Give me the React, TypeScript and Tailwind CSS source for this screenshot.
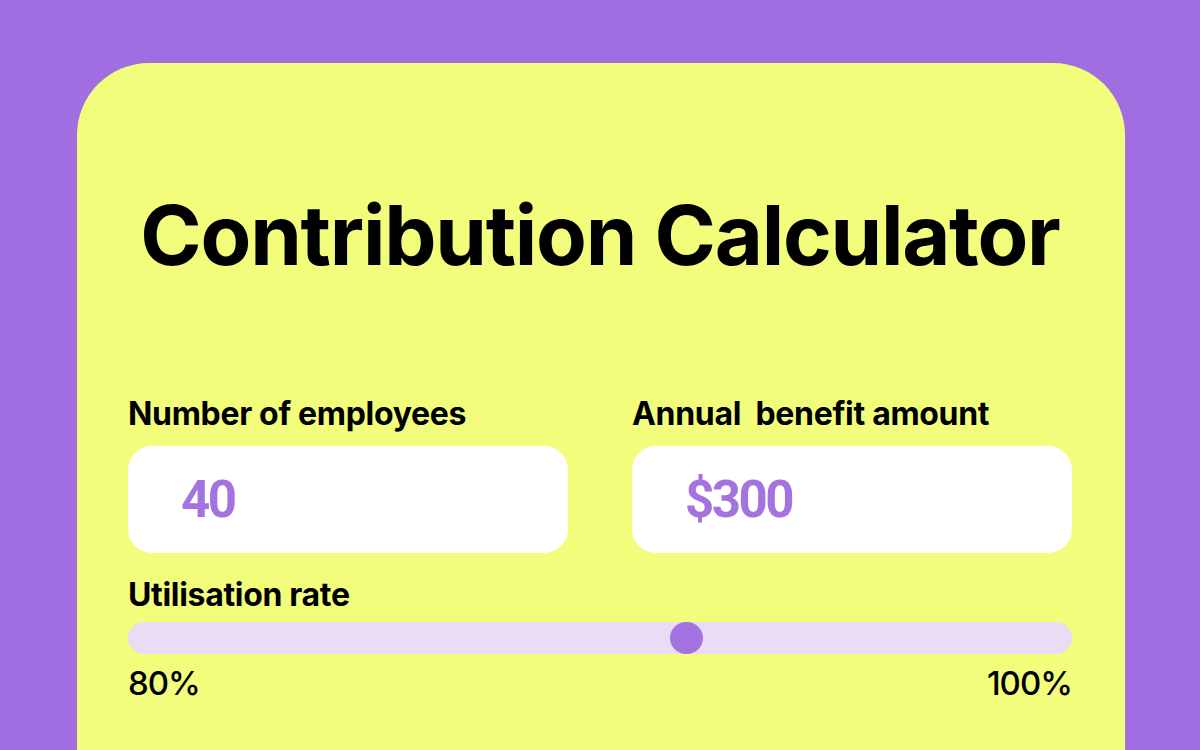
import React from "react";

export default function App() {
  return (
    <div className="w-[1200px] h-[750px] overflow-hidden bg-[#a06ee0] pt-[63px] pl-[77px] pr-[75px]" style={{ fontFamily: "Inter, 'Noto Sans', sans-serif" }}>
      <div className="h-[800px] bg-[#f1fd7b] rounded-[72px] pl-[51px] pr-[53px] pt-[131px]">
        <h1 className="text-center text-[83px] leading-none font-bold tracking-[-0.015em] text-black whitespace-nowrap">
          Contribution Calculator
        </h1>
        <div className="mt-[121px] grid grid-cols-2 gap-[64px]">
          <div>
            <div className="text-[32px] leading-none font-bold tracking-[-0.01em] text-black whitespace-nowrap">Number of employees</div>
            <div className="mt-[16px] h-[107px] rounded-[24px] bg-white flex items-center pl-[53px]">
              <span className="text-[51px] leading-none font-bold tracking-[-0.05em] text-[#a473e0] font-['Roboto',sans-serif]">40</span>
            </div>
          </div>
          <div>
            <div className="text-[32px] leading-none font-bold tracking-[-0.01em] text-black whitespace-nowrap">Annual&nbsp; benefit amount</div>
            <div className="mt-[16px] h-[107px] rounded-[24px] bg-white flex items-center pl-[53px]">
              <span className="text-[51px] leading-none font-bold tracking-[-0.05em] text-[#a473e0] font-['Roboto',sans-serif]">$300</span>
            </div>
          </div>
        </div>
        <div className="mt-[26px] text-[32px] leading-none font-bold tracking-[-0.01em] text-black">Utilisation rate</div>
        <div className="mt-[11px] h-[32px] rounded-full bg-[#e8dcf6] relative">
          <div className="absolute top-0 left-[542px] w-[33px] h-[32px] rounded-full bg-[#a473e0]" />
        </div>
        <div className="mt-[13px] flex justify-between text-[33px] leading-none font-medium tracking-[-0.03em] text-black">
          <span>80%</span>
          <span>100%</span>
        </div>
      </div>
    </div>
  );
}
